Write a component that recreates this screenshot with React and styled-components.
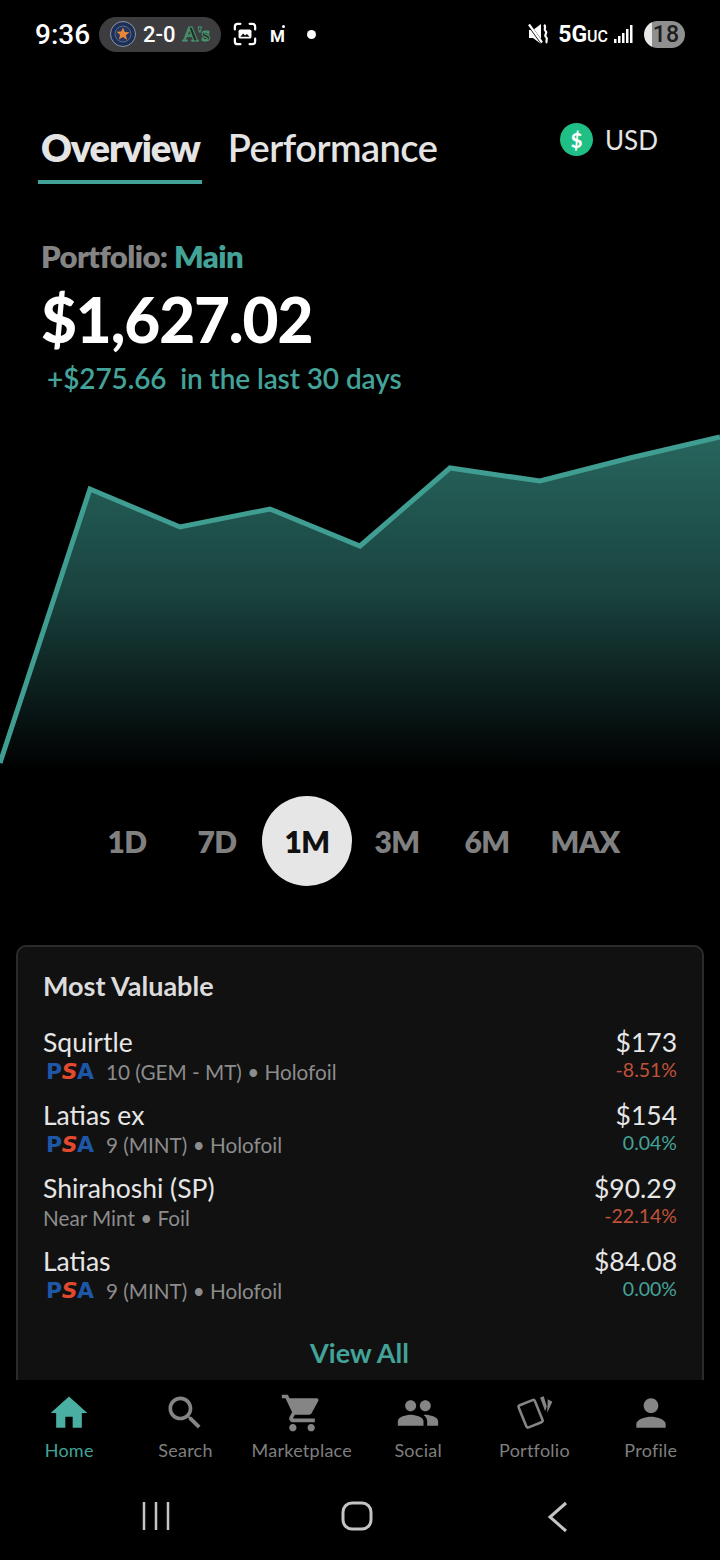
import React from 'react';
import styled, { createGlobalStyle } from 'styled-components';

const TEAL = '#44a398';

const GlobalStyle = createGlobalStyle`
  html, body {
    margin: 0;
    padding: 0;
    background: #000;
  }
  * {
    box-sizing: border-box;
  }
`;

const Screen = styled.div`
  width: 720px;
  height: 1560px;
  display: flex;
  flex-direction: column;
  overflow: hidden;
  background: #000;
  font-family: Lato, "Noto Sans", sans-serif;
`;

const StatusBar = styled.div`
  height: 70px;
  flex: none;
  display: flex;
  align-items: center;
  padding: 0 35px 2px 35px;
  color: #fff;
  font-family: Roboto, sans-serif;
`;

const Time = styled.span`
  font-size: 28px;
  font-weight: 500;
  width: 64px;
`;

const ScorePill = styled.div`
  width: 122px;
  height: 35px;
  border-radius: 18px;
  background: #3d3d3f;
  display: flex;
  align-items: center;
  padding-left: 11px;
  font-size: 22px;
  font-weight: 500;
  gap: 7px;
`;

const AwayLogo = styled.span`
  font-family: "Liberation Serif", serif;
  font-weight: 700;
  font-size: 22px;
  letter-spacing: -1.5px;
  color: #1c2a24;
  -webkit-text-stroke: 1px #4a9a74;
`;

const NotifyIcons = styled.div`
  display: flex;
  align-items: center;
  margin-left: 12px;
`;

const MailMark = styled.span`
  font-size: 17px;
  font-weight: 700;
  position: relative;
  margin: 3px 0 0 13px;
  &::after {
    content: '';
    position: absolute;
    top: -1px;
    right: 0;
    width: 3px;
    height: 3px;
    border-radius: 50%;
    background: #fff;
  }
`;

const Dot = styled.span`
  width: 9px;
  height: 9px;
  border-radius: 50%;
  background: #fff;
  margin-left: 22px;
`;

const SystemIcons = styled.div`
  margin-left: auto;
  display: flex;
  align-items: center;
`;

const Network = styled.span`
  font-size: 23px;
  font-weight: 700;
  margin-left: 8px;
  small {
    font-size: 16px;
    font-weight: 500;
  }
`;

const SignalBars = styled.svg`
  width: 20px;
  height: 20px;
  margin-left: 6px;
  fill: #fff;
`;

const Battery = styled.div`
  width: 41px;
  height: 27px;
  border-radius: 14px;
  margin-left: 10px;
  background: linear-gradient(to right, #e8e8e8 8px, #8f8f8f 8px);
  color: #1c1c1c;
  font-size: 23px;
  font-weight: 500;
  line-height: 27px;
  text-align: right;
  padding-right: 6px;
`;

const Main = styled.div`
  flex: 1;
  min-height: 0;
  overflow: hidden;
`;

const Header = styled.div`
  display: flex;
  justify-content: space-between;
  align-items: flex-start;
  padding: 33px 62px 0 38px;
`;

const Tabs = styled.div`
  display: flex;
  gap: 23px;
`;

const Tab = styled.div`
  padding: 22px 2px 11px 3px;
  height: 81px;
  font-size: 38px;
  line-height: 44px;
  letter-spacing: ${p => (p.$active ? '-1.1px' : '-0.5px')};
  font-weight: ${p => (p.$active ? 800 : 600)};
  color: #e4e4e4;
  border-bottom: 4px solid ${p => (p.$active ? TEAL : 'transparent')};
`;

const Currency = styled.div`
  display: flex;
  align-items: center;
  gap: 12px;
  padding-top: 20px;
  font-size: 26px;
  color: #e4e4e4;
`;

const CurrencyBadge = styled.span`
  width: 33px;
  height: 33px;
  border-radius: 50%;
  background: #1fbf85;
  color: #fff;
  font-size: 20px;
  font-weight: 900;
  display: flex;
  align-items: center;
  justify-content: center;
`;

const Summary = styled.div`
  padding: 52px 0 0 41px;
`;

const PortfolioLabel = styled.div`
  font-size: 31px;
  line-height: 40px;
  font-weight: 800;
  letter-spacing: -0.6px;
  color: #848484;
  span {
    color: ${TEAL};
  }
`;

const Amount = styled.div`
  font-size: 62px;
  line-height: 70px;
  font-weight: 900;
  letter-spacing: -1.1px;
  color: #fff;
  margin-top: 8px;
`;

const Change = styled.div`
  font-size: 28px;
  line-height: 40px;
  font-weight: 600;
  letter-spacing: -0.1px;
  color: ${TEAL};
  padding-left: 6px;
  margin-top: 4px;
  white-space: pre;
`;

const Chart = styled.svg`
  display: block;
  width: 720px;
  height: 340px;
  margin-top: 33px;
`;

const Ranges = styled.div`
  display: flex;
  justify-content: center;
  margin-top: 25px;
`;

const Range = styled.div`
  width: ${p => (p.$wide ? '106px' : '90px')};
  height: 90px;
  border-radius: 50%;
  display: flex;
  align-items: center;
  justify-content: center;
  font-size: 30px;
  font-weight: 800;
  letter-spacing: -0.6px;
  color: ${p => (p.$active ? '#111' : '#808080')};
  background: ${p => (p.$active ? '#e6e6e6' : 'transparent')};
`;

const Card = styled.div`
  margin: 59px 16px 0;
  padding: 22px 26px 0 25px;
  background: #111;
  border: 2px solid #2b2b2b;
  border-radius: 10px;
  height: 500px;
`;

const CardTitle = styled.div`
  font-size: 27px;
  line-height: 34px;
  font-weight: 700;
  color: #dcdcdc;
  margin-bottom: 22px;
`;

const Row = styled.div`
  display: flex;
  justify-content: space-between;
  height: 73px;
`;

const CardName = styled.div`
  font-size: 26.5px;
  line-height: 34px;
  color: #e6e6e6;
`;

const CardMeta = styled.div`
  display: flex;
  align-items: center;
  font-size: 20.7px;
  line-height: 26px;
  color: #8c8c8c;
`;

const PsaMark = styled.span`
  display: inline-flex;
  align-items: center;
  width: 50px;
  margin: 0 10px 0 3px;
  font-family: "DejaVu Sans", sans-serif;
  font-size: 22px;
  font-weight: 700;
  letter-spacing: -0.5px;
  color: #1e56a8;
  i {
    color: #e2492f;
    font-style: italic;
  }
`;

const RowValue = styled.div`
  text-align: right;
  margin-right: -1px;
`;

const Price = styled.div`
  font-size: 26.5px;
  line-height: 34px;
  color: #e6e6e6;
`;

const Delta = styled.div`
  font-size: 19.5px;
  line-height: 22px;
  color: ${p => (p.$down ? '#c0523a' : TEAL)};
`;

const ViewAll = styled.div`
  text-align: center;
  font-size: 27px;
  line-height: 34px;
  font-weight: 700;
  color: ${TEAL};
  margin-top: 19px;
`;

const Nav = styled.div`
  height: 100px;
  flex: none;
  display: flex;
  padding: 11px 11px 0;
  background: #000;
`;

const NavItem = styled.div`
  flex: 1;
  display: flex;
  flex-direction: column;
  align-items: center;
  color: ${p => (p.$active ? TEAL : '#7f7f7f')};
  font-size: 18px;
  line-height: 24px;
  letter-spacing: 0.25px;
`;

const NavIcon = styled.svg`
  width: 44px;
  height: 44px;
  margin-bottom: 3px;
  fill: ${p => (p.$active ? '#4aaea3' : '#858585')};
`;

const AndroidBar = styled.div`
  height: 80px;
  flex: none;
  display: flex;
  align-items: flex-start;
  justify-content: space-between;
  padding: 21px 150px 0 141px;
`;

const points = [[0, 332], [90, 58], [180, 96], [270, 78], [360, 115], [450, 37], [540, 50], [630, 27], [720, 6]];
const line = points.map(p => p.join(',')).join(' ');

const ranges = ['1D', '7D', '1M', '3M', '6M', 'MAX'];

const cards = [
  { name: 'Squirtle', meta: '10 (GEM - MT) • Holofoil', psa: true, price: '$173', delta: '-8.51%', down: true },
  { name: 'Latias ex', meta: '9 (MINT) • Holofoil', psa: true, price: '$154', delta: '0.04%' },
  { name: 'Shirahoshi (SP)', meta: 'Near Mint • Foil', price: '$90.29', delta: '-22.14%', down: true },
  { name: 'Latias', meta: '9 (MINT) • Holofoil', psa: true, price: '$84.08', delta: '0.00%' },
];

const navItems = [
  { label: 'Home', active: true, icon: <path d="M10 20v-6h4v6h5v-8h3L12 3 2 12h3v8z" /> },
  { label: 'Search', icon: <path d="M15.5 14h-.79l-.28-.27C15.41 12.59 16 11.11 16 9.5 16 5.91 13.09 3 9.5 3S3 5.91 3 9.5 5.91 16 9.5 16c1.61 0 3.09-.59 4.23-1.57l.27.28v.79l5 4.99L20.49 19l-4.99-5zm-6 0C7.01 14 5 11.99 5 9.5S7.01 5 9.5 5 14 7.01 14 9.5 11.99 14 9.5 14z" /> },
  { label: 'Marketplace', icon: <path d="M7 18c-1.1 0-1.99.9-1.99 2S5.9 22 7 22s2-.9 2-2-.9-2-2-2zM1 2v2h2l3.6 7.59-1.35 2.45c-.16.28-.25.61-.25.96 0 1.1.9 2 2 2h12v-2H7.42c-.14 0-.25-.11-.25-.25l.03-.12.9-1.63h7.45c.75 0 1.41-.41 1.75-1.03l3.58-6.49c.08-.14.12-.31.12-.48 0-.55-.45-1-1-1H5.21l-.94-2H1zm16 16c-1.1 0-1.99.9-1.99 2s.89 2 1.99 2 2-.9 2-2-.9-2-2-2z" /> },
  { label: 'Social', icon: <path d="M16 11c1.66 0 2.99-1.34 2.99-3S17.66 5 16 5c-1.66 0-3 1.34-3 3s1.34 3 3 3zm-8 0c1.66 0 2.99-1.34 2.99-3S9.66 5 8 5C6.34 5 5 6.34 5 8s1.34 3 3 3zm0 2c-2.33 0-7 1.17-7 3.5V19h14v-2.5c0-2.33-4.67-3.5-7-3.5zm8 0c-.29 0-.62.02-.97.05 1.16.84 1.97 1.97 1.97 3.45V19h6v-2.5c0-2.33-4.67-3.5-7-3.5z" /> },
  {
    label: 'Portfolio',
    icon: (
      <>
        <rect x="5.4" y="5.9" width="9.5" height="13" rx="1" fill="none" stroke="#858585" strokeWidth="1.4" transform="rotate(-22 10.15 12.4)" />
        <path d="M15.3 3.500l2-.6 1.700 5.500-.9 2.600zM19.500 4.500l2.500 1.300-2.800 6.200z" />
      </>
    ),
  },
  { label: 'Profile', icon: <path d="M12 12c2.21 0 4-1.79 4-4s-1.79-4-4-4-4 1.79-4 4 1.79 4 4 4zm0 2c-2.67 0-8 1.34-8 4v2h16v-2c0-2.66-5.33-4-8-4z" /> },
];

const App = () => (
  <Screen>
    <GlobalStyle />
    <StatusBar>
      <Time>9:36</Time>
      <ScorePill>
        <svg width="26" height="26" viewBox="0 0 26 26">
          <circle cx="13" cy="13" r="12.5" fill="#1c2f55" stroke="#8d93a8" strokeWidth="1" />
          <circle cx="13" cy="13" r="8" fill="#24365f" stroke="#5c6885" strokeWidth="1" />
          <path d="M13 6.500l1.800 4.500 4.700.3-3.600 3 1.200 4.700L13 16l-4.100 2.500 1.200-4.700-3.600-3 4.700-.3z" fill="#e8863a" />
        </svg>
        2-0
        <AwayLogo>A's</AwayLogo>
      </ScorePill>
      <NotifyIcons>
        <svg width="24" height="24" viewBox="0 0 26 26" fill="none" stroke="#fff" strokeWidth="2.4" strokeLinecap="round">
          <path d="M2 8V5a3 3 0 0 1 3-3h3M18 2h3a3 3 0 0 1 3 3v3M24 18v3a3 3 0 0 1-3 3h-3M8 24H5a3 3 0 0 1-3-3v-3" />
          <rect x="6" y="8" width="14" height="10" rx="2" fill="#fff" stroke="none" />
          <path d="M8 16l3-3.500 2 2 2-1.500 3 3z" fill="#000" stroke="none" />
        </svg>
        <MailMark>M</MailMark>
        <Dot />
      </NotifyIcons>
      <SystemIcons>
        <svg width="22" height="24" viewBox="0 0 22 24">
          <path d="M1 8h4l8-6v20l-8-6H1z" fill="#fff" />
          <path d="M1 3l13 18" stroke="#000" strokeWidth="3" />
          <path d="M1 2.500l13 18" stroke="#fff" strokeWidth="2.200" />
          <path d="M16 3c3 2-1 4 1.500 6s-2 4 .5 6-1 4 1 6" fill="none" stroke="#fff" strokeWidth="2.200" />
        </svg>
        <Network>5G<small>UC</small></Network>
        <SignalBars viewBox="0 0 20 20">
          <rect x="0" y="15" width="2.500" height="4" />
          <rect x="4" y="12" width="2.500" height="7" />
          <rect x="8" y="9" width="2.500" height="10" />
          <rect x="12" y="5" width="2.500" height="14" />
          <rect x="16" y="1" width="2.500" height="18" />
        </SignalBars>
        <Battery>18</Battery>
      </SystemIcons>
    </StatusBar>

    <Main>
      <Header>
        <Tabs>
          <Tab $active>Overview</Tab>
          <Tab>Performance</Tab>
        </Tabs>
        <Currency>
          <CurrencyBadge>$</CurrencyBadge>
          USD
        </Currency>
      </Header>

      <Summary>
        <PortfolioLabel>Portfolio: <span>Main</span></PortfolioLabel>
        <Amount>$1,627.02</Amount>
        <Change>+$275.66  in the last 30 days</Change>
      </Summary>

      <Chart viewBox="0 0 720 340">
        <defs>
          <linearGradient id="area" x1="0" y1="0" x2="0" y2="1">
            <stop offset="0" stopColor="#27655d" />
            <stop offset="0.45" stopColor="#1a4440" />
            <stop offset="1" stopColor="#000" />
          </linearGradient>
        </defs>
        <polygon points={`${line} 720,340 0,340`} fill="url(#area)" />
        <polyline points={line} fill="none" stroke="#3f9d92" strokeWidth="5" />
      </Chart>

      <Ranges>
        {ranges.map(r => (
          <Range key={r} $active={r === '1M'} $wide={r === 'MAX'}>{r}</Range>
        ))}
      </Ranges>

      <Card>
        <CardTitle>Most Valuable</CardTitle>
        {cards.map(c => (
          <Row key={c.name}>
            <div>
              <CardName>{c.name}</CardName>
              <CardMeta>
                {c.psa && <PsaMark>P<i>S</i>A</PsaMark>}
                {c.meta}
              </CardMeta>
            </div>
            <RowValue>
              <Price>{c.price}</Price>
              <Delta $down={c.down}>{c.delta}</Delta>
            </RowValue>
          </Row>
        ))}
        <ViewAll>View All</ViewAll>
      </Card>
    </Main>

    <Nav>
      {navItems.map(item => (
        <NavItem key={item.label} $active={item.active}>
          <NavIcon viewBox="0 0 24 24" $active={item.active}>{item.icon}</NavIcon>
          {item.label}
        </NavItem>
      ))}
    </Nav>

    <AndroidBar>
      <svg width="30" height="30" viewBox="0 0 30 30" stroke="#c4c4c4" strokeWidth="2.500">
        <path d="M3 1v28M15 1v28M27 1v28" />
      </svg>
      <svg width="32" height="30" viewBox="0 0 32 30" fill="none" stroke="#c4c4c4" strokeWidth="3">
        <rect x="2" y="2" width="28" height="26" rx="9" />
      </svg>
      <svg width="28" height="32" viewBox="0 0 28 32" fill="none" stroke="#c4c4c4" strokeWidth="3">
        <path d="M24 2L8 16l16 14" />
      </svg>
    </AndroidBar>
  </Screen>
);

export default App;
